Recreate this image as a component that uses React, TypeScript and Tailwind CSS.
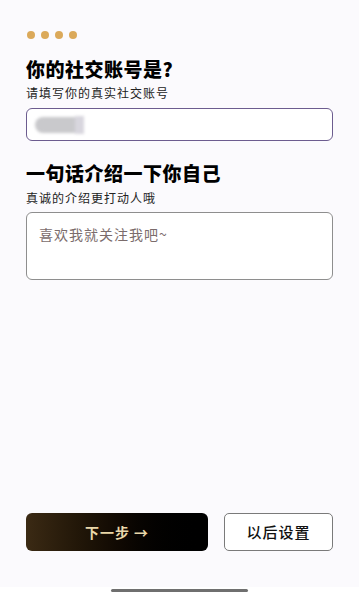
export default function App() {
  return (
    <div
      className="w-[359px] h-[608px] flex flex-col bg-white text-black"
      style={{ fontFamily: '"Noto Sans CJK SC", "Noto Sans", sans-serif' }}
    >
      {/* Main form area */}
      <div className="h-[587px] flex flex-col bg-[#fbfafd] px-[26px]">
        {/* Step dots */}
        <div className="mt-[31px] flex gap-[6px] pl-px">
          <span className="w-[8px] h-[8px] rounded-full bg-[#dba95a]" />
          <span className="w-[8px] h-[8px] rounded-full bg-[#dba95a]" />
          <span className="w-[8px] h-[8px] rounded-full bg-[#dba95a]" />
          <span className="w-[8px] h-[8px] rounded-full bg-[#dba95a]" />
        </div>

        <h1 className="mt-[17px] text-[19px] leading-[26px] font-black tracking-[0.5px]">
          你的社交账号是?
        </h1>
        <p className="mt-[2px] text-[12px] leading-[18px] tracking-[1px] text-[#222]">
          请填写你的真实社交账号
        </p>

        <div className="mt-[6px] h-[33px] rounded-[6px] border-[1.5px] border-[#6c5c8f] bg-white flex items-center pl-[8px]">
          <div className="flex items-center blur-[1.5px]">
            <span className="w-[40px] h-[16px] rounded-l-[8px] bg-[#c9c9cc]" />
            <span className="w-[9px] h-[18px] bg-[#d8d6de]" />
          </div>
        </div>

        <h2 className="mt-[19px] text-[19px] leading-[26px] font-black tracking-[0.5px]">
          一句话介绍一下你自己
        </h2>
        <p className="mt-[3px] text-[12px] leading-[18px] tracking-[1px] text-[#222]">
          真诚的介绍更打动人哦
        </p>

        <div className="mt-[5px] h-[68px] rounded-[6px] border border-[#8e8e8e] bg-white px-[12px] pt-[8px]">
          <span className="text-[14px] leading-[20px] tracking-[1px] text-[#7b6c6c]">
            喜欢我就关注我吧~
          </span>
        </div>

        {/* Actions */}
        <div className="mt-auto mb-[36px] flex gap-[16px]">
          <button className="w-[182px] h-[38px] rounded-[6px] bg-gradient-to-r from-[#3b2a14] to-black text-[#e9d7a9] text-[14px] font-bold tracking-[1px]">
            下一步 →
          </button>
          <button className="flex-1 h-[38px] rounded-[5px] border border-[#7a7a7a] bg-white text-[15px] font-medium tracking-[1px] text-[#111]">
            以后设置
          </button>
        </div>
      </div>

      {/* Home indicator */}
      <div className="flex-1 flex justify-center pt-[2px]">
        <span className="w-[137px] h-[3px] rounded-full bg-[#6f6f6f]" />
      </div>
    </div>
  );
}
